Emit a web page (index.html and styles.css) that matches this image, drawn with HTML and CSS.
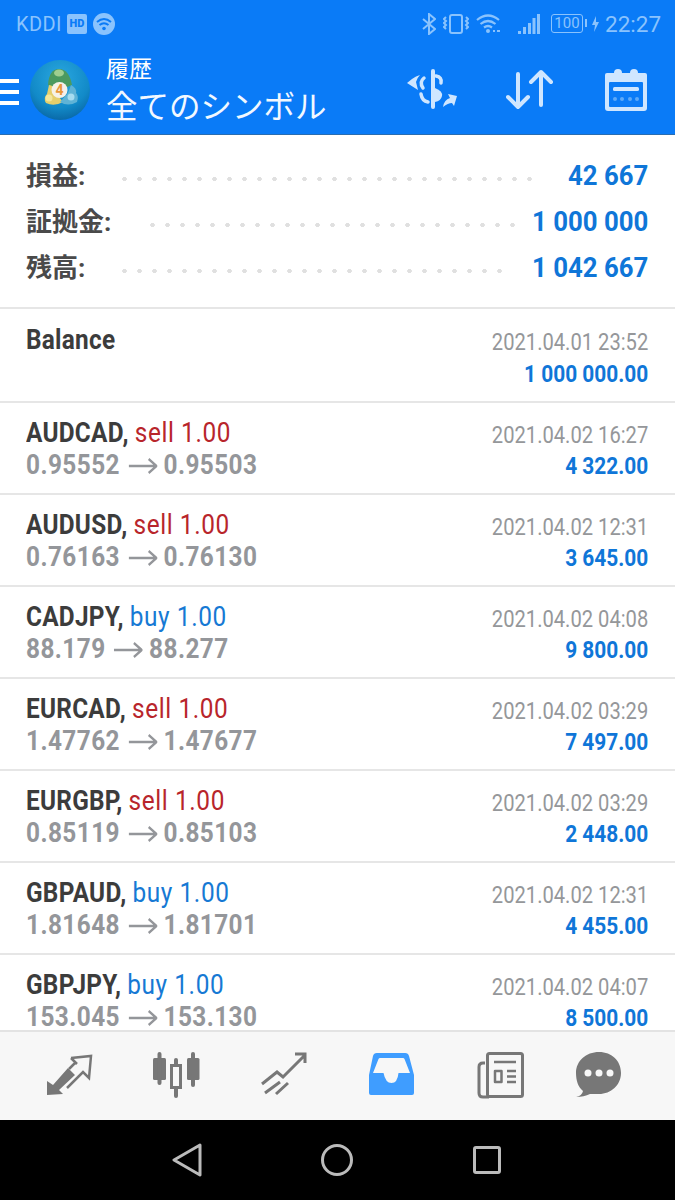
FILE: index.html
```html
<!DOCTYPE html>
<html lang="ja">
<head>
<meta charset="utf-8">
<title>履歴</title>
<link rel="stylesheet" href="styles.css">
</head>
<body>
<svg class="defs" width="0" height="0"><defs><symbol id="arrow" viewBox="0 0 33 18"><path d="M0 9H31M23 2l9 7-9 7" fill="none" stroke="#94969a" stroke-width="2.600"/></symbol></defs></svg>
<div class="app">
  <header class="top">
    <div class="status">
      <div class="status-left">
        <span class="carrier">KDDI</span>
        <span class="hd">HD</span>
        <svg class="st-wifi" width="22" height="22" viewBox="0 0 22 22"><circle cx="11" cy="11" r="11" fill="#8ac3fd"/><path d="M4 9q7-6 14 0M6.500 12q4.500-3.500 9 0" fill="none" stroke="#0a7bf7" stroke-width="2"/><circle cx="11" cy="15.500" r="1.800" fill="#0a7bf7"/></svg>
      </div>
      <div class="status-right">
        <svg width="14" height="22" viewBox="0 0 14 22" fill="none" stroke="#8ac3fd" stroke-width="2"><path d="M1 6l12 10-6 5V1l6 5L1 16"/></svg>
        <svg width="26" height="20" viewBox="0 0 26 20" fill="none" stroke="#8ac3fd" stroke-width="2"><rect x="7" y="1" width="12" height="18" rx="2"/><path d="M3 3l-2 2 2 2-2 2 2 2-2 2 2 2M23 3l2 2-2 2 2 2-2 2 2 2-2 2"/></svg>
        <svg width="25" height="20" viewBox="0 0 25 20" fill="none" stroke="#8ac3fd" stroke-width="2.200"><path d="M1 6q11-9 22 0M4.500 10q7.500-6 15 0M8 13.500q4-3 8 0"/><circle cx="12" cy="17" r="2" fill="#8ac3fd" stroke="none"/><path d="M17 17h2M21 17h3" stroke-width="1.800"/></svg>
        <svg class="st-signal" width="22" height="22" viewBox="0 0 22 22" fill="#8ac3fd"><rect x="0" y="18" width="3" height="3"/><rect x="5" y="14" width="3" height="7"/><rect x="10" y="10" width="3" height="11"/><rect x="14.500" y="5" width="3" height="16"/><rect x="19" y="1" width="3" height="20"/></svg>
        <span class="battery">100</span>
        <svg class="st-bolt" width="7" height="16" viewBox="0 0 7 16" fill="#8ac3fd"><path d="M4 0L0 9h3l-1 7 5-10H4z"/></svg>
        <span class="time">22:27</span>
      </div>
    </div>
    <div class="bar">
      <div class="burger"><i></i><i></i><i></i></div>
      <svg class="logo" width="60" height="60" viewBox="0 0 60 60">
        <defs>
          <radialGradient id="lg" cx="50%" cy="30%" r="70%"><stop offset="0" stop-color="#2aa8e0"/><stop offset=".7" stop-color="#128ac8"/><stop offset="1" stop-color="#0a6aa8"/></radialGradient>
        </defs>
        <circle cx="30" cy="30" r="30" fill="url(#lg)"/>
        <path d="M18 25q1-16 11-16t13 16l-7 3H24z" fill="#4b9a5f"/>
        <ellipse cx="29" cy="13" rx="5" ry="3.500" fill="#9fcf8f"/>
        <path d="M16 43q-3-5 1-9l2-9q5 0 6 7l8 10q-9 5-17 1z" fill="#e5cf6b"/>
        <circle cx="19" cy="38" r="3.500" fill="#f3e69a"/>
        <path d="M30 42l8-9 3-8q6 3 5 8 3 3 1 9-9 5-17 0z" fill="#5fb3d6"/>
        <circle cx="41" cy="37" r="3.500" fill="#a6dcf0"/>
        <circle cx="29.500" cy="30" r="8" fill="#f6f1e8"/>
        <text class="logo-num" x="29.500" y="35">4</text>
      </svg>
      <div class="titles">
        <div class="sub">履歴</div>
        <div class="title">全てのシンボル</div>
      </div>
      <div class="actions">
        <svg class="act-dollar" width="54" height="42" viewBox="0 0 54 42"><g fill="none" stroke="#cfe6ff" stroke-linecap="round"><path d="M29 2v36" stroke-width="4"/><path d="M32 7q6 1 5 7M20 9q-5 4-1 10M17 25q1 7 7 8" stroke-width="3.500"/></g><g fill="#cfe6ff"><path d="M31 19q8 3 7 8t-7 6z"/><path d="M3 14l5-4q4-3 8-4-3 3-4 7l2 8z"/><path d="M53 27l-9-2 2 4q-6 2-7 9 5-4 9-4l2 3z"/></g></svg>
        <svg width="48" height="42" viewBox="0 0 48 42" fill="none" stroke="#cfe6ff" stroke-width="4" stroke-linecap="round" stroke-linejoin="round"><path d="M12 5v33M2 28l10 10 10-10M35 36V3M25 13L35 3l10 10"/></svg>
        <svg width="44" height="44" viewBox="0 0 44 44"><path d="M3 5h38a2 2 0 0 1 2 2v33a3 3 0 0 1-3 3H4a3 3 0 0 1-3-3V7a2 2 0 0 1 2-2z" fill="#cfe6ff"/><circle cx="14" cy="5" r="4" fill="#cfe6ff"/><circle cx="30" cy="5" r="4" fill="#cfe6ff"/><rect x="5" y="14" width="34" height="25" rx="1" fill="#0a7bf7"/><rect x="9" y="19" width="26" height="4" rx="1.500" fill="#cfe6ff"/><g fill="#5ea9f8"><circle cx="11" cy="31" r="2"/><circle cx="18" cy="31" r="2"/><circle cx="26" cy="31" r="2"/><circle cx="33" cy="31" r="2"/></g></svg>
      </div>
    </div>
  </header>

  <section class="summary">
    <div class="sum-row"><span class="sum-label">損益:</span><span class="leader leader-a"></span><span class="sum-value">42 667</span></div>
    <div class="sum-row"><span class="sum-label">証拠金:</span><span class="leader leader-b"></span><span class="sum-value">1 000 000</span></div>
    <div class="sum-row"><span class="sum-label">残高:</span><span class="leader leader-c"></span><span class="sum-value">1 042 667</span></div>
  </section>

  <main class="list">
    <div class="row balance">
      <div class="left"><div class="line"><b class="sym">Balance</b></div></div>
      <div class="right"><div class="line date">2021.04.01 23:52</div><div class="line profit">1 000 000.00</div></div>
    </div>
    <div class="row">
      <div class="left"><div class="line"><b class="sym">AUDCAD,</b> <span class="sell">sell 1.00</span></div><div class="line prices">0.95552<svg class="arrow"><use href="#arrow"/></svg>0.95503</div></div>
      <div class="right"><div class="line date">2021.04.02 16:27</div><div class="line profit">4 322.00</div></div>
    </div>
    <div class="row">
      <div class="left"><div class="line"><b class="sym">AUDUSD,</b> <span class="sell">sell 1.00</span></div><div class="line prices">0.76163<svg class="arrow"><use href="#arrow"/></svg>0.76130</div></div>
      <div class="right"><div class="line date">2021.04.02 12:31</div><div class="line profit">3 645.00</div></div>
    </div>
    <div class="row">
      <div class="left"><div class="line"><b class="sym">CADJPY,</b> <span class="buy">buy 1.00</span></div><div class="line prices">88.179<svg class="arrow"><use href="#arrow"/></svg>88.277</div></div>
      <div class="right"><div class="line date">2021.04.02 04:08</div><div class="line profit">9 800.00</div></div>
    </div>
    <div class="row">
      <div class="left"><div class="line"><b class="sym">EURCAD,</b> <span class="sell">sell 1.00</span></div><div class="line prices">1.47762<svg class="arrow"><use href="#arrow"/></svg>1.47677</div></div>
      <div class="right"><div class="line date">2021.04.02 03:29</div><div class="line profit">7 497.00</div></div>
    </div>
    <div class="row">
      <div class="left"><div class="line"><b class="sym">EURGBP,</b> <span class="sell">sell 1.00</span></div><div class="line prices">0.85119<svg class="arrow"><use href="#arrow"/></svg>0.85103</div></div>
      <div class="right"><div class="line date">2021.04.02 03:29</div><div class="line profit">2 448.00</div></div>
    </div>
    <div class="row">
      <div class="left"><div class="line"><b class="sym">GBPAUD,</b> <span class="buy">buy 1.00</span></div><div class="line prices">1.81648<svg class="arrow"><use href="#arrow"/></svg>1.81701</div></div>
      <div class="right"><div class="line date">2021.04.02 12:31</div><div class="line profit">4 455.00</div></div>
    </div>
    <div class="row">
      <div class="left"><div class="line"><b class="sym">GBPJPY,</b> <span class="buy">buy 1.00</span></div><div class="line prices">153.045<svg class="arrow"><use href="#arrow"/></svg>153.130</div></div>
      <div class="right"><div class="line date">2021.04.02 04:07</div><div class="line profit">8 500.00</div></div>
    </div>
  </main>

  <nav class="tabs">
    <svg width="48" height="48" viewBox="0 0 48 48"><path d="M2 44V30l6 4 15-17 7 7-16 15 4 4z" fill="#777"/><path d="M26 7l20-2-2 22-6-6-16 16M30 12l-6 6M26 7l6 6" fill="none" stroke="#777" stroke-width="2.500"/></svg>
    <svg width="48" height="48" viewBox="0 0 48 48" fill="#777"><rect x="0" y="7" width="13" height="22" rx="1.500"/><rect x="4.500" y="1" width="4" height="33" rx="2"/><rect x="21" y="7" width="4" height="40" rx="2"/><rect x="18.500" y="14.500" width="9" height="22" fill="#f7f7f7" stroke="#777" stroke-width="3"/><rect x="34" y="7" width="12.500" height="22" rx="1.500"/><rect x="38" y="1" width="4" height="35" rx="2"/></svg>
    <svg width="48" height="48" viewBox="0 0 48 48" fill="none" stroke="#777" stroke-width="3"><path d="M1 33l15-12 6 5L43 5M34 3h10v9M4 42l15-11M15 43l12-11"/></svg>
    <svg width="48" height="48" viewBox="0 0 48 48"><path d="M8 2h28a4 4 0 0 1 4 3l5 19v18a2 2 0 0 1-2 2H2a2 2 0 0 1-2-2V24L4 5a4 4 0 0 1 4-3z" fill="#3f9dff"/><path d="M11 7h23q1 0 1.500 1L41 22H29.500q-1 10-7 10t-8-10H4L9.500 8q.5-1 1.500-1z" fill="#f7f7f7"/></svg>
    <svg width="48" height="48" viewBox="0 0 48 48"><g fill="none" stroke="#777" stroke-width="3" stroke-linejoin="round"><rect x="10.500" y="2.500" width="35" height="43" rx="2"/><path d="M8 12H6q-4 0-4 4v26q0 4 4 4h6"/><rect x="18" y="20" width="6.500" height="11" stroke-width="2.500"/><path d="M17 11h22M30 20h9M30 25.500h9M30 31h9" stroke-width="2.600"/></g></svg>
    <svg class="tab-last" width="48" height="48" viewBox="0 0 48 48"><path d="M1 46q6-1 7-6C3 36 1 29 1 22 1 10 11 1 24 1s22 9 22 21-10 21-22 21q-6 0-9 0-6 3-14 3z" fill="#777"/><g fill="#f7f7f7"><circle cx="13" cy="22" r="3.500"/><circle cx="24" cy="22" r="3.500"/><circle cx="35" cy="22" r="3.500"/></g></svg>
  </nav>

  <footer class="nav">
    <svg width="32" height="34" viewBox="0 0 32 34" fill="none" stroke="#bbb" stroke-width="3" stroke-linejoin="round"><path d="M29 2L3 17l26 15z"/></svg>
    <svg width="32" height="34" viewBox="0 0 32 34" fill="none" stroke="#bbb" stroke-width="3"><circle cx="16" cy="17" r="14.500"/></svg>
    <svg width="32" height="34" viewBox="0 0 32 34" fill="none" stroke="#bbb" stroke-width="3"><rect x="3.500" y="4.500" width="25" height="25" rx="1.500"/></svg>
  </footer>
</div>
</body>
</html>
```
FILE: styles.css
```css
* { box-sizing: border-box; }
html, body { margin: 0; padding: 0; }
body { font-family: Roboto, "Noto Sans CJK JP", sans-serif; background: #fff; }
.defs { display: block; height: 0; }
.app { width: 675px; height: 1200px; display: flex; flex-direction: column; overflow: hidden; }

.top { height: 135px; background: #0a7bf7; border-bottom: 1px solid #2a6db0; flex: none; }
.status { height: 46px; display: flex; justify-content: space-between; align-items: center; padding: 1px 15px 0 16px; color: #8ac3fd; }
.status-left, .status-right { display: flex; align-items: center; }
.carrier { font-size: 20px; letter-spacing: .4px; }
.hd { width: 20px; height: 20px; margin-left: 5px; background: #8ac3fd; color: #0a7bf7; border-radius: 2px; font-size: 11px; font-weight: 900; display: flex; align-items: center; justify-content: center; }
.st-wifi { margin-left: 6px; }
.status-right svg { margin-left: 7px; }
.status-right .st-signal { margin-left: 17px; }
.status-right .st-bolt { margin-left: 9px; }
.battery { margin-left: 11px; width: 32px; height: 19px; border: 1.500px solid #8ac3fd; border-radius: 3px; font-size: 15px; line-height: 16px; text-align: center; position: relative; }
.battery::after { content: ""; position: absolute; right: -5px; top: 4px; width: 2px; height: 8px; background: #8ac3fd; }
.time { margin-left: 6px; font-size: 22.500px; width: 55px; white-space: nowrap; }

.bar { height: 88px; display: flex; align-items: center; }
.burger { width: 19px; display: flex; flex-direction: column; gap: 7px; margin-top: 4px; }
.burger i { display: block; height: 4px; background: #fff; }
.logo { margin-left: 11px; flex: none; }
.logo-num { font: 700 14px Roboto, sans-serif; fill: #e8973a; text-anchor: middle; }
.titles { margin-left: 16px; color: #fff; padding-top: 8px; }
.sub { font-size: 23px; line-height: 28px; }
.title { font-size: 31.500px; line-height: 48px; color: #f2f8ff; white-space: nowrap; }
.actions { margin-left: auto; display: flex; align-items: center; gap: 50px; padding-right: 27px; }
.act-dollar { margin-right: -2px; }

.summary { flex: none; height: 174px; padding: 17px 27px 0 26px; border-bottom: 2px solid #e6e6e6; }
.sum-row { height: 46px; display: flex; align-items: center; }
.sum-label { font-size: 26px; font-weight: 700; color: #4a4a4a; margin-bottom: 4px; }
.sum-value { font-size: 28px; font-weight: 700; color: #0f76d8; transform: scaleX(.92); transform-origin: right center; white-space: nowrap; }
.leader { flex: 1; height: 6px; margin: 7px 0 0 32px; background: radial-gradient(circle, #e0e0e0 2px, transparent 2.500px) 0 0 / 15px 6px repeat-x; }
.leader-a { margin-right: 26px; }
.leader-b { margin-left: 34px; margin-right: 7px; }
.leader-c { margin-right: 19px; }

.list { flex: 1; min-height: 0; overflow: hidden; }
.row { height: 92px; padding: 14px 27px 0 26px; display: flex; justify-content: space-between; border-bottom: 2px solid #e6e6e6; }
.balance { height: 94px; padding-top: 15px; }
.line { height: 32px; line-height: 32px; white-space: nowrap; }
.left .line { font-size: 28px; transform: scaleX(.87); transform-origin: left center; }
.right { text-align: right; padding-top: 2px; }
.right .line { transform: scaleX(.84); transform-origin: right center; }
.sym { font-weight: 700; color: #3c3c3c; letter-spacing: .3px; }
.sell { color: #b8252b; letter-spacing: .7px; }
.buy { color: #1679d4; letter-spacing: .7px; }
.prices { font-weight: 700; color: #94969a; letter-spacing: .5px; }
.arrow { width: 33px; height: 18px; margin: 0 7px 0 10px; vertical-align: -1px; }
.date { font-size: 24px; color: #95979a; }
.right .profit { font-size: 24px; font-weight: 700; color: #0f76d8; transform: scaleX(.87); margin-top: -1px; }
.balance .right .profit { margin-top: 0; }

.tabs { flex: none; height: 90px; background: #f7f7f7; border-top: 2px solid #e3e3e3; padding: 19px 0 0 45px; display: flex; align-items: flex-start; gap: 60px; }
.tab-last { margin-left: -10px; }
.nav { flex: none; height: 80px; background: #000; display: flex; align-items: center; padding-left: 171px; gap: 118px; }
```
